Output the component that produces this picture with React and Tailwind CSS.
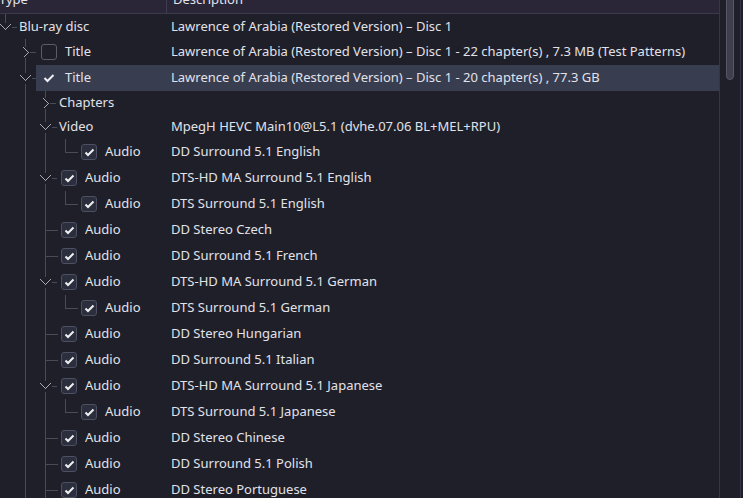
import React from "react";

const GUIDE = "#4a4b58";
const CHEV = "#a9aab4";

const rows = [
  { level: 0, exp: "open", check: null, label: "Blu-ray disc", desc: "Lawrence of Arabia (Restored Version) – Disc 1", h: 25 },
  { level: 1, exp: "closed", check: false, label: "Title", desc: "Lawrence of Arabia (Restored Version) – Disc 1 - 22 chapter(s) , 7.3 MB (Test Patterns)", h: 26 },
  { level: 1, exp: "open", check: true, label: "Title", desc: "Lawrence of Arabia (Restored Version) – Disc 1 - 20 chapter(s) , 77.3 GB", h: 26, selected: true },
  { level: 2, exp: "closed", check: null, label: "Chapters", desc: "", h: 24 },
  { level: 2, exp: "open", check: null, label: "Video", desc: "MpegH HEVC Main10@L5.1 (dvhe.07.06 BL+MEL+RPU)", h: 24 },
  { level: 3, last: true, check: true, label: "Audio", desc: "DD Surround 5.1 English", h: 26 },
  { level: 2, exp: "open", check: true, label: "Audio", desc: "DTS-HD MA Surround 5.1 English", h: 26 },
  { level: 3, last: true, check: true, label: "Audio", desc: "DTS Surround 5.1 English", h: 26 },
  { level: 2, check: true, label: "Audio", desc: "DD Stereo Czech", h: 26 },
  { level: 2, check: true, label: "Audio", desc: "DD Surround 5.1 French", h: 26 },
  { level: 2, exp: "open", check: true, label: "Audio", desc: "DTS-HD MA Surround 5.1 German", h: 26 },
  { level: 3, last: true, check: true, label: "Audio", desc: "DTS Surround 5.1 German", h: 26 },
  { level: 2, check: true, label: "Audio", desc: "DD Stereo Hungarian", h: 26 },
  { level: 2, check: true, label: "Audio", desc: "DD Surround 5.1 Italian", h: 26 },
  { level: 2, exp: "open", check: true, label: "Audio", desc: "DTS-HD MA Surround 5.1 Japanese", h: 26 },
  { level: 3, last: true, check: true, label: "Audio", desc: "DTS Surround 5.1 Japanese", h: 26 },
  { level: 2, check: true, label: "Audio", desc: "DD Stereo Chinese", h: 26 },
  { level: 2, check: true, label: "Audio", desc: "DD Surround 5.1 Polish", h: 26 },
  { level: 2, check: true, label: "Audio", desc: "DD Stereo Portuguese", h: 26 },
];

function Guides({ row, width }) {
  const h = row.h;
  const c = Math.round(h / 2) + 0.5;
  const bx = 5 + 20 * row.level + 0.5;
  const els = [];
  const anc = [];
  if (row.level === 0) anc.push({ x: 5.5, to: c - 5 });
  if (row.level >= 2) anc.push({ x: 25.5, full: true });
  if (row.level >= 3) anc.push({ x: 45.5, full: true });
  anc.forEach((a, i) => {
    els.push(<line key={"a" + i} x1={a.x} y1={0} x2={a.x} y2={a.full ? h : a.to} stroke={GUIDE} />);
  });
  if (row.level >= 1) {
    if (row.exp) {
      els.push(<line key="v1" x1={bx} y1={0} x2={bx} y2={c - 6} stroke={GUIDE} />);
      els.push(<line key="v2" x1={bx} y1={c + 5} x2={bx} y2={h} stroke={GUIDE} />);
    } else if (row.last) {
      els.push(<line key="v1" x1={bx} y1={0} x2={bx} y2={c} stroke={GUIDE} />);
    } else {
      els.push(<line key="v1" x1={bx} y1={0} x2={bx} y2={h} stroke={GUIDE} />);
    }
  }
  if (row.exp === "open") {
    els.push(
      <polyline key="ch" points={`${bx - 5},${c - 3} ${bx},${c + 2} ${bx + 5},${c - 3}`} fill="none" stroke={CHEV} strokeWidth="1.1" />
    );
    els.push(<line key="st" x1={bx + 6} y1={c} x2={bx + 11} y2={c} stroke={GUIDE} />);
  } else if (row.exp === "closed") {
    els.push(
      <polyline key="ch" points={`${bx - 2},${c - 5} ${bx + 3},${c} ${bx - 2},${c + 5}`} fill="none" stroke={CHEV} strokeWidth="1.1" />
    );
    els.push(<line key="st" x1={bx + 4} y1={c} x2={bx + 10} y2={c} stroke={GUIDE} />);
  } else {
    els.push(<line key="st" x1={bx} y1={c} x2={bx + 12} y2={c} stroke={GUIDE} />);
  }
  return (
    <svg width={width} height={h} className="flex-none block" shapeRendering="crispEdges">
      {els}
    </svg>
  );
}

function Check({ checked, bare }) {
  if (bare) {
    return (
      <div className="w-[16px] h-[16px] flex items-center justify-center flex-none">
        <svg width="12" height="10" viewBox="0 0 12 10">
          <polyline points="1.5,5 4.5,8 10.5,2" fill="none" stroke="#f0f0f4" strokeWidth="2" />
        </svg>
      </div>
    );
  }
  return (
    <div
      className={
        "w-[16px] h-[16px] rounded-[3px] border flex items-center justify-center flex-none " +
        (checked ? "border-[#4d5062] bg-[#2b2e3c]" : "border-[#5a5c6a] bg-transparent")
      }
    >
      {checked && (
        <svg width="11" height="9" viewBox="0 0 11 9">
          <polyline points="1.5,4.5 4,7 9.5,1.5" fill="none" stroke="#f0f0f4" strokeWidth="2" />
        </svg>
      )}
    </div>
  );
}

function Row({ row }) {
  const branch = 5 + 20 * row.level;
  const guideW = row.selected ? branch + 11 : row.check !== null ? branch + 16 : branch + 14;
  return (
    <div className="flex" style={{ height: row.h }}>
      <Guides row={row} width={guideW} />
      <div className={"flex flex-1 items-center " + (row.selected ? "bg-[#383d4f]" : "")}>
        <div className="flex items-center flex-none" style={{ width: 166 - guideW }}>
          {row.check !== null && (
            <div className={row.selected ? "ml-[5px]" : ""}>
              <Check checked={row.check} bare={row.selected} />
            </div>
          )}
          <span className={row.check !== null ? "ml-[8px]" : ""}>{row.label}</span>
        </div>
        <div className="pl-[5px] whitespace-nowrap">{row.desc}</div>
      </div>
    </div>
  );
}

export default function App() {
  return (
    <div
      className="w-[743px] h-[498px] overflow-hidden bg-[#1e1f29] text-[#e2e2ea] text-[13px] flex"
      style={{ fontFamily: '"Noto Sans", sans-serif' }}
    >
      <div className="w-[719px] flex-none flex flex-col">
        <div className="h-[14px] flex-none overflow-hidden bg-[#2a2638] border-b border-[#3c394d]">
          <div className="h-[26px] -mt-[13px] flex items-center">
            <div className="w-[167px] flex-none border-r border-[#403c52] h-full flex items-center">
              <span className="-ml-px">Type</span>
            </div>
            <div className="pl-[6px]">Description</div>
          </div>
        </div>
        <div className="flex flex-col">
          {rows.map((r, i) => (
            <Row key={i} row={r} />
          ))}
        </div>
      </div>
      <div className="w-[22px] flex-none border-l border-r border-[#363746] flex justify-center">
        <div className="w-[8px] h-[90px] -mt-[10px] rounded-full bg-[#3d3f4d] border border-[#56586a]" />
      </div>
    </div>
  );
}
